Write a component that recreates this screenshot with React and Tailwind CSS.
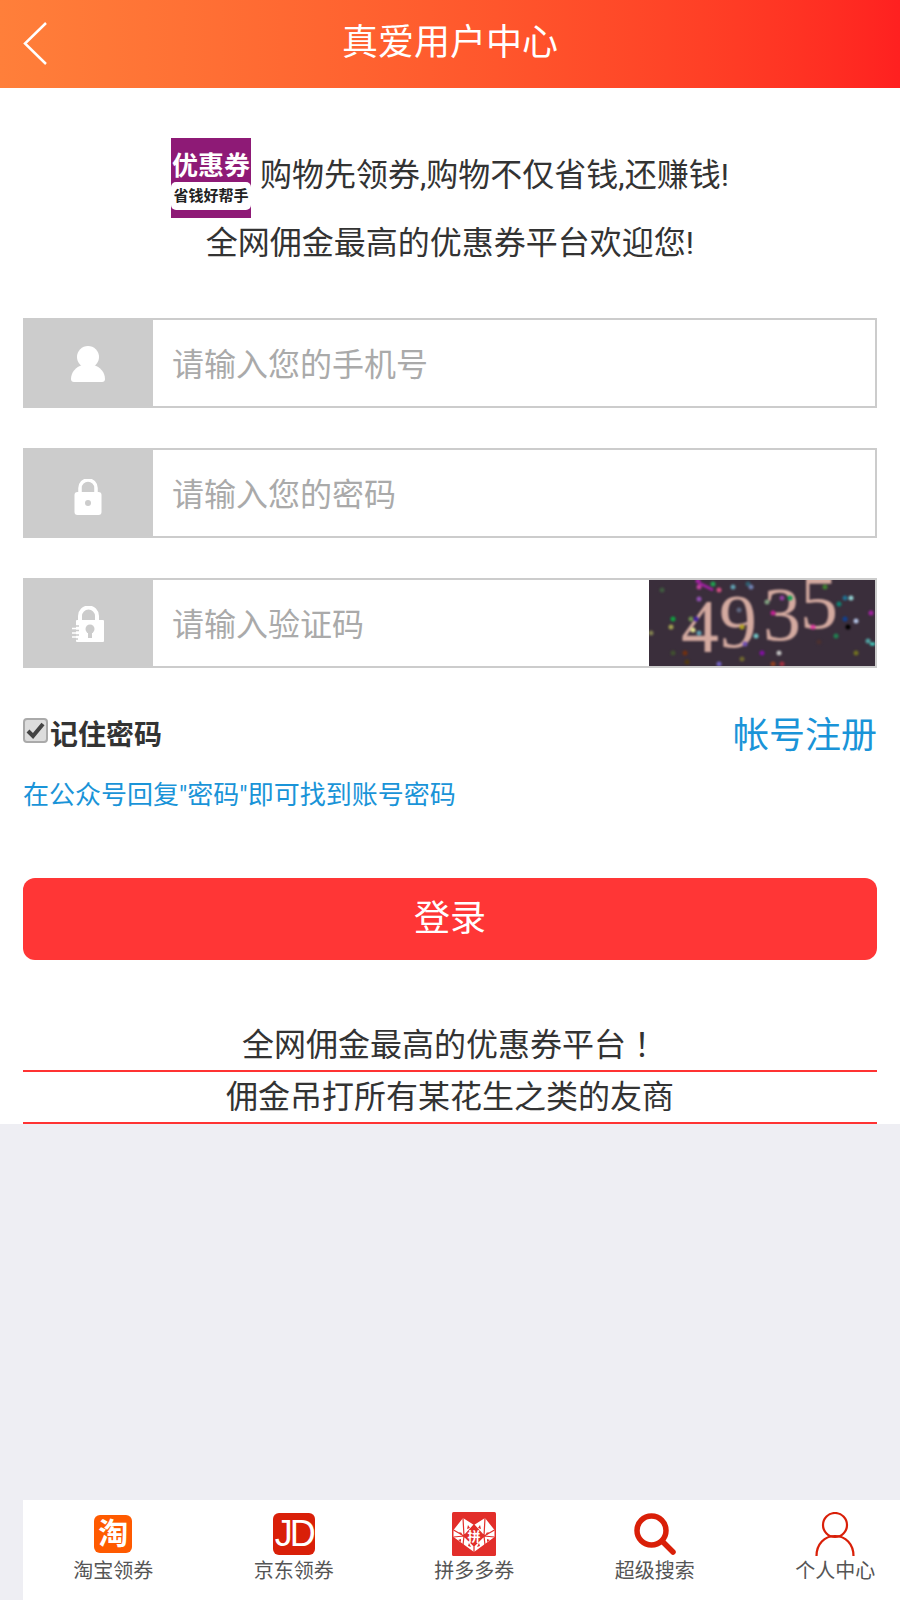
const FONT = 'font-["Roboto","Noto_Sans_CJK_SC",sans-serif]';

const CAPTCHA_DOTS = [
  [13, 10, '#3f5a3f'], [49, 1, '#a020a0'], [64, 4, '#20a050'], [50, 7, '#c040a0'], [70, 10, '#d05080'],
  [84, 7, '#60a0b0'], [99, 4, '#305f70'], [102, 7, '#7080b0'], [176, 7, '#408030'], [196, 18, '#207090'],
  [202, 18, '#90d0d0'], [190, 24, '#108070'], [222, 33, '#a020a0'], [141, 18, '#10a050'], [133, 18, '#9040a0'],
  [118, 22, '#80a080'], [124, 33, '#c02090'], [90, 30, '#606880'], [50, 19, '#9050b0'], [24, 39, '#10a040'],
  [22, 47, '#a0a050'], [42, 39, '#709050'], [47, 39, '#4020a0'], [44, 50, '#e0e090'], [50, 53, '#60a0b0'],
  [2, 53, '#808050'], [93, 47, '#b0a020'], [107, 56, '#70c0c0'], [96, 64, '#7050b0'], [164, 47, '#e040a0'],
  [196, 39, '#104090'], [207, 41, '#b0c0e0'], [199, 47, '#000000'], [187, 56, '#208050'], [219, 61, '#50a0a0'],
  [207, 73, '#707020'], [170, 62, '#4a3030'], [130, 73, '#c0c0c0'], [113, 73, '#8010a0'], [93, 79, '#706830'],
  [70, 84, '#7060c0'], [124, 84, '#904020'], [133, 84, '#a03040'], [24, 73, '#405030'], [36, 73, '#703010'],
  [38, 82, '#503810'],
];

const BackIcon = () => (
  <svg width="24" height="43" viewBox="0 0 24 43" fill="none" stroke="#fff" strokeWidth="2.500" className="absolute left-[23px] top-[22px]">
    <path d="M23 1L2 21.500 23 42" />
  </svg>
);

const UserIcon = () => (
  <svg width="34" height="36" viewBox="0 0 34 36" fill="#fff">
    <circle cx="17" cy="11" r="11" />
    <path d="M0 33c0-7 5-12 11-14h12c6 2 11 7 11 14 0 2-1 3-3 3H3c-2 0-3-1-3-3z" />
  </svg>
);

const LockIcon = () => (
  <svg width="28" height="36" viewBox="0 0 28 36" className="mt-[6px]">
    <path d="M6 15V9a8 8 0 0 1 16 0v6" fill="none" stroke="#fff" strokeWidth="3.500" />
    <rect x="0.500" y="13" width="27" height="23" rx="3" fill="#fff" />
    <circle cx="14" cy="24" r="3" fill="#ccc" />
  </svg>
);

const CodeLockIcon = () => (
  <svg width="32" height="36" viewBox="0 0 32 36">
    <path d="M8 16V10a8.500 8.500 0 0 1 17 0v6" fill="none" stroke="#fff" strokeWidth="4" />
    <rect x="4" y="14" width="28" height="22" rx="1" fill="#fff" />
    <circle cx="18" cy="23" r="4.500" fill="#ccc" />
    <rect x="16" y="24" width="4" height="8" fill="#ccc" />
    <path d="M0 20h7M1 24.500h6M0 29h7M0 33h6" stroke="#ccc" strokeWidth="1.500" />
    <path d="M0 22.500h4M0 27h4M0 31h4" stroke="#fff" strokeWidth="1.500" />
  </svg>
);

const Captcha = () => (
  <svg width="226" height="86" viewBox="0 0 226 86" className="shrink-0 bg-[#3a2e3b]">
    <g style={{ filter: 'blur(0.8px)' }}>
      <g fill="#d4aaa0" fontFamily="'Liberation Serif', serif" fontSize="76">
        <text x="32" y="72">4</text>
        <text x="70" y="67">9</text>
        <text x="114" y="60">3</text>
        <text x="151" y="48">5</text>
      </g>
      <path d="M50 3l14 7" stroke="#a020a0" strokeWidth="3" />
      <path d="M221 64h5" stroke="#40d0c0" strokeWidth="3" />
      {CAPTCHA_DOTS.map(([cx, cy, fill], i) => (
        <circle key={i} cx={cx} cy={cy} r="2.500" fill={fill} />
      ))}
    </g>
  </svg>
);

const Field = ({ icon, placeholder, type = 'text', children }) => (
  <div className="flex h-[90px] border-2 border-[#ccc] bg-white">
    <div className="flex w-[130px] shrink-0 -my-[2px] -ml-[2px] items-center justify-center bg-[#ccc] pt-[2px]">{icon}</div>
    <input
      type={type}
      placeholder={placeholder}
      className="min-w-0 flex-1 pt-[4px] pl-[19px] text-[32px] text-[#333] outline-none placeholder:text-[#aaa]"
    />
    {children}
  </div>
);

const PddIcon = () => (
  <svg width="44" height="44" viewBox="0 0 44 44">
    <rect width="44" height="44" rx="1.500" fill="#e22e2a" />
    <path d="M22 13L11 6 1.500 18v7L22 40l20.500-15v-7L33 6z" fill="#fff" />
    <path
      d="M1.500 25L12 24 22 13 32 24l10.500 1M11 6l1 18M33 6l-1 18M1.500 18L12 24M42.500 18L32 24M12 24l10 10 10-10M12 24l-1 9M32 24l1 9M22 34v6"
      fill="none"
      stroke="#e22e2a"
      strokeWidth="1.200"
    />
    <path d="M22 13l10 11-10 10-10-10z" fill="#e22e2a" />
    <path d="M7 20l3 1-1 2zM16 13l2 3-3 1zM28 13l-2 3 3 1zM37 20l-3 1 1 2zM6 28l3-1 0 3zM17 31l-1 3 3 1zM27 31l1 3-3 1zM38 28l-3-1 0 3z" fill="#e22e2a" />
    <text x="22" y="29" textAnchor="middle" fontSize="13" fontWeight="700" fill="#fff" fontFamily="'Noto Sans CJK SC', sans-serif">拼</text>
  </svg>
);

const NAV_ITEMS = [
  {
    label: '淘宝领券',
    icon: (
      <div className="flex h-[38px] w-[38px] items-center justify-center rounded-[6px] bg-[#ff5a00] text-[30px] leading-none font-bold text-white">
        淘
      </div>
    ),
  },
  {
    label: '京东领券',
    icon: (
      <div className="flex h-[42px] w-[42px] items-center justify-center rounded-[6px] bg-[#d91f08] font-['Liberation_Sans',sans-serif] text-[36px] leading-none tracking-[-3px] text-white">
        JD
      </div>
    ),
  },
  { label: '拼多多券', icon: <PddIcon /> },
  {
    label: '超级搜索',
    icon: (
      <svg width="42" height="42" viewBox="0 0 42 42" fill="none" stroke="#d91f08">
        <circle cx="17.500" cy="17.500" r="14.500" strokeWidth="5.500" />
        <path d="M29 29l10 10" strokeWidth="5.500" strokeLinecap="round" />
      </svg>
    ),
  },
  {
    label: '个人中心',
    icon: (
      <svg width="40" height="44" viewBox="0 0 40 44" fill="none" stroke="#d91f08" strokeWidth="2.200">
        <circle cx="20" cy="13" r="12" />
        <path d="M1.500 44c0-12 8-20 18.500-20s18.500 8 18.500 20" />
      </svg>
    ),
  },
];

const App = () => {
  return (
    <div className={`flex h-[1600px] flex-col overflow-hidden bg-[#eeeef3] ${FONT}`}>
      {/* Header */}
      <header className="relative flex h-[88px] shrink-0 items-center justify-center bg-gradient-to-r from-[#ff7f3a] to-[#ff2020]">
        <BackIcon />
        <h1 className="-mt-[3px] text-[36px] font-normal text-white">真爱用户中心</h1>
      </header>

      <main className="bg-white px-[23px] pt-[50px]">
        {/* Intro */}
        <div className="text-center text-[32px] leading-none text-[#333]">
          <div className="flex items-center justify-center gap-[9px]">
            <div className="flex h-[80px] w-[80px] shrink-0 flex-col items-center justify-end bg-[#8e1a76] pb-[8px] font-bold">
              <span className="text-[26px] leading-[32px] whitespace-nowrap text-white">优惠券</span>
              <span className="w-full rounded-[5px] bg-white text-[15px] leading-[28px] whitespace-nowrap text-[#222]">省钱好帮手</span>
            </div>
            <p className="-mt-[6px]">购物先领券,购物不仅省钱,还赚钱!</p>
          </div>
          <p className="mt-[9px] leading-[32px]">全网佣金最高的优惠券平台欢迎您!</p>
        </div>

        {/* Form */}
        <div className="mt-[59px] flex flex-col gap-[40px]">
          <Field icon={<UserIcon />} placeholder="请输入您的手机号" />
          <Field icon={<LockIcon />} placeholder="请输入您的密码" type="password" />
          <Field icon={<CodeLockIcon />} placeholder="请输入验证码">
            <Captcha />
          </Field>
        </div>

        <div className="mt-[48px] flex items-start justify-between">
          <label className="flex items-start gap-[2px] text-[28px] leading-[40px] font-bold text-[#333]">
            <span className="mt-[2px] flex h-[25px] w-[25px] items-center justify-center rounded-[4px] border-2 border-[#aaa] bg-[#ddd]">
              <svg width="19" height="17" viewBox="0 0 19 17" fill="none" stroke="#444" strokeWidth="4">
                <path d="M2 9l5 5L17 2" />
              </svg>
            </span>
            记住密码
          </label>
          <a className="text-[36px] leading-[40px] text-[#1a94d8]">帐号注册</a>
        </div>
        <a className="mt-[21px] block text-[26px] leading-[36px] text-[#1a94d8]">在公众号回复"密码"即可找到账号密码</a>

        <button className="mt-[65px] h-[82px] w-full rounded-[12px] bg-[#ff3636] text-[36px] text-white">登录</button>

        {/* Slogans */}
        <div className="mt-[57px] text-center text-[32px] leading-[50px] text-[#333]">
          <p className="border-b-2 border-[#ff3333]">
            全网佣金最高的优惠券平台<span className='font-["Noto_Sans_CJK_TC",sans-serif]'>！</span>
          </p>
          <p className="border-b-2 border-[#ff3333]">佣金吊打所有某花生之类的友商</p>
        </div>
      </main>

      {/* Bottom nav */}
      <nav className="mt-auto ml-[23px] flex h-[100px] shrink-0 bg-white">
        {NAV_ITEMS.map((item) => (
          <a key={item.label} className="flex w-[180.5px] shrink-0 flex-col items-center pt-[12px] text-[20px] leading-[26px] text-[#555]">
            <div className="flex h-[44px] items-center">{item.icon}</div>
            <span className="mt-[2px]">{item.label}</span>
          </a>
        ))}
      </nav>
    </div>
  );
};

export default App;
